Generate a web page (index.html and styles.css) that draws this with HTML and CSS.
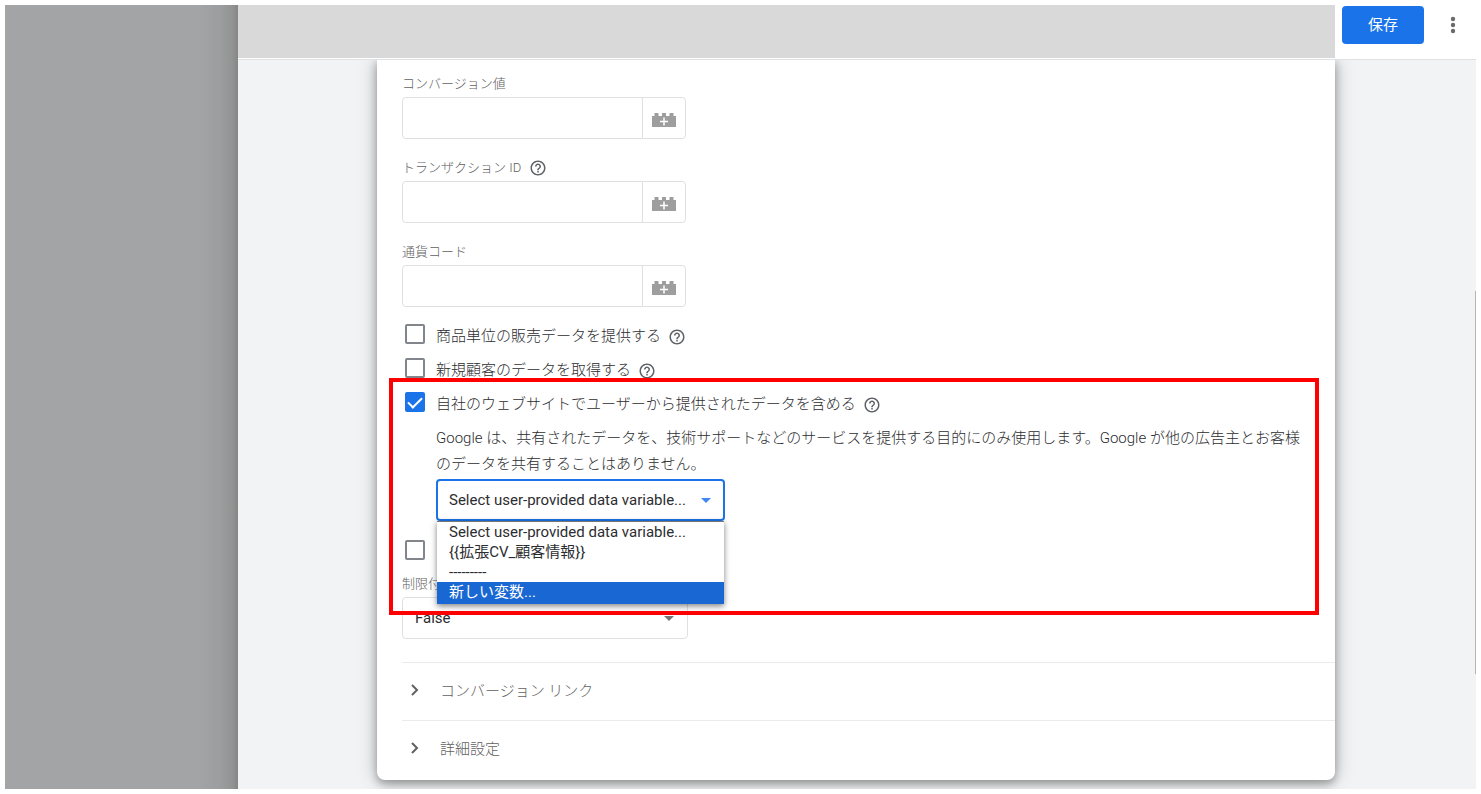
FILE: index.html
```html
<!DOCTYPE html>
<html lang="ja">
<head>
  <meta charset="UTF-8" />
  <meta name="viewport" content="width=device-width, initial-scale=1" />
  <title>タグの設定</title>
  <link rel="stylesheet" href="styles.css">
</head>
<body>

  <svg class="sprite" aria-hidden="true">
    <symbol id="brick" viewBox="0 0 24 16">
      <path fill="#9e9e9e" d="M0 4h2.500V1h4v3h3.500V1h4v3h3.500V1h4v3H24v11H0z" />
      <path stroke="#fff" stroke-width="1.500" d="M12 5.500v8M8 9.500h8" />
    </symbol>
    <symbol id="help" viewBox="0 0 24 24">
      <path d="M11 18h2v-2h-2v2zm1-16C6.480 2 2 6.480 2 12s4.480 10 10 10 10-4.480 10-10S17.520 2 12 2zm0 18c-4.410 0-8-3.590-8-8s3.590-8 8-8 8 3.590 8 8-3.590 8-8 8zm0-14c-2.210 0-4 1.790-4 4h2c0-1.100.9-2 2-2s2 .9 2 2c0 2-3 1.750-3 5h2c0-2.250 3-2.500 3-5 0-2.210-1.790-4-4-4z" />
    </symbol>
  </svg>

  <aside class="backdrop"></aside>

  <main class="sheet">
    <header class="topbar">
      <div class="title-area"></div>
      <div class="actions">
        <button type="button" class="save">保存</button>
        <button type="button" class="more" aria-label="その他">
          <svg width="6" height="18" viewBox="0 0 6 18"><circle cx="3" cy="3" r="2.200" /><circle cx="3" cy="9" r="2.200" /><circle cx="3" cy="15" r="2.200" /></svg>
        </button>
      </div>
    </header>

    <div class="content">
      <form class="card">
        <div class="field">
          <div class="field-label"><label for="value">コンバージョン値</label></div>
          <div class="input-group">
            <input type="text" id="value" />
            <button type="button" aria-label="変数を選択"><svg width="24" height="16"><use href="#brick" /></svg></button>
          </div>
        </div>
        <div class="field">
          <div class="field-label">
            <label for="transaction">トランザクション ID</label>
            <svg class="help" width="18" height="18"><use href="#help" /></svg>
          </div>
          <div class="input-group">
            <input type="text" id="transaction" />
            <button type="button" aria-label="変数を選択"><svg width="24" height="16"><use href="#brick" /></svg></button>
          </div>
        </div>
        <div class="field">
          <div class="field-label"><label for="currency">通貨コード</label></div>
          <div class="input-group">
            <input type="text" id="currency" />
            <button type="button" aria-label="変数を選択"><svg width="24" height="16"><use href="#brick" /></svg></button>
          </div>
        </div>

        <div class="check">
          <input type="checkbox" id="items" />
          <label for="items">商品単位の販売データを提供する</label>
          <svg class="help" width="18" height="18"><use href="#help" /></svg>
        </div>
        <div class="check">
          <input type="checkbox" id="newcustomer" />
          <label for="newcustomer">新規顧客のデータを取得する</label>
          <svg class="help" width="18" height="18"><use href="#help" /></svg>
        </div>

        <div class="highlighted">
          <div class="check">
            <input type="checkbox" id="userdata" checked />
            <label for="userdata">自社のウェブサイトでユーザーから提供されたデータを含める</label>
            <svg class="help" width="18" height="18"><use href="#help" /></svg>
          </div>
          <div class="indent">
            <p>Google は、共有されたデータを、技術サポートなどのサービスを提供する目的にのみ使用します。Google が他の広告主とお客様のデータを共有することはありません。</p>
            <div class="select-box active">
              <select aria-label="ユーザー提供データ変数">
                <option>Select user-provided data variable...</option>
              </select>
              <ul class="menu" role="listbox">
                <li role="option">Select user-provided data variable...</li>
                <li role="option">{{拡張CV_顧客情報}}</li>
                <li role="option">---------</li>
                <li role="option" class="selected" aria-selected="true">新しい変数...</li>
              </ul>
            </div>
          </div>
          <div class="check last">
            <input type="checkbox" aria-label="配送データ" />
          </div>
          <div class="field-label"><label for="restricted">制限付</label></div>
          <div class="frame"></div>
        </div>

        <div class="select-box">
          <select id="restricted">
            <option>False</option>
          </select>
        </div>

        <div class="sections">
          <button type="button" class="section">
            <svg width="8" height="12" viewBox="0 0 8 12"><path d="M1 1l5 5-5 5" /></svg>
            コンバージョン リンク
          </button>
          <button type="button" class="section">
            <svg width="8" height="12" viewBox="0 0 8 12"><path d="M1 1l5 5-5 5" /></svg>
            詳細設定
          </button>
        </div>
      </form>
      <div class="scrollbar"></div>
    </div>
  </main>

</body>
</html>
```

FILE: styles.css
```css
* {
  box-sizing: border-box;
}

body {
  margin: 0;
  padding: 5px;
  height: 100vh;
  display: flex;
  overflow: hidden;
  background: #fff;
  color: #2c2d30;
  font-family: Roboto, "Noto Sans CJK JP", sans-serif;
  font-size: 15px;
}

input,
select,
button {
  font: inherit;
  color: inherit;
}

button {
  border: 0;
  padding: 0;
  background: none;
  cursor: pointer;
}

.sprite {
  display: none;
}

.backdrop {
  width: 233px;
  flex: none;
  background: linear-gradient(to left, #868686 0, #929393 6px, #9c9d9e 18px, #a3a4a5 40px);
}

.sheet {
  flex: 1;
  min-width: 0;
  display: flex;
  flex-direction: column;
}

/* top bar */
.topbar {
  display: flex;
  height: 55px;
  flex: none;
  padding-bottom: 1px;
  border-bottom: 1px solid #dfe1e3;
}

.title-area {
  flex: 1;
  background: #d9d9d9;
}

.actions {
  width: 141px;
  flex: none;
  display: flex;
  align-items: flex-start;
  padding: 1px 0 0 7px;
}

.save {
  width: 82px;
  height: 38px;
  flex: none;
  padding-bottom: 3px;
  border-radius: 4px;
  background: #1a73e8;
  color: #fff;
}

.more {
  width: 58px;
  flex: none;
  height: 38px;
}

.more svg {
  display: block;
  margin: auto;
  fill: #6b6b6b;
}

/* card */
.content {
  flex: 1;
  min-height: 0;
  position: relative;
  overflow: hidden;
  background: #f1f3f4;
}

.card {
  margin: 0 141px 0 139px;
  padding: 11px 0 2px 25px;
  background: #fff;
  border-radius: 0 0 8px 8px;
  box-shadow: 0 4px 8px rgba(0, 0, 0, 0.3), 0 0 20px rgba(0, 0, 0, 0.25);
}

.field {
  margin-bottom: 16px;
}

.field + .check {
  margin-top: -6px;
}

.field-label {
  display: flex;
  align-items: center;
  gap: 8px;
  height: 26px;
  font-size: 13px;
  font-weight: 300;
  color: #616161;
}

.field-label label {
  margin-bottom: 3px;
}

.help {
  flex: none;
  fill: #5f6368;
}

.input-group {
  display: flex;
  width: 284px;
  height: 42px;
  border: 1px solid #e0e0e0;
  border-radius: 4px;
}

.input-group input {
  flex: 1;
  min-width: 0;
  border: 0;
  padding: 0 12px;
  background: none;
}

.input-group button {
  width: 43px;
  border-left: 1px solid #e0e0e0;
}

.input-group svg {
  display: block;
  margin: 4px auto 0;
}

.check {
  display: flex;
  align-items: center;
  height: 34px;
  padding-left: 3px;
}

.check input {
  appearance: none;
  flex: none;
  width: 20px;
  height: 20px;
  margin: 0 11px 0 0;
  border: 2px solid #80868b;
  border-radius: 2px;
}

.check input:checked {
  border-color: #1a73e8;
  background: #1a73e8;
  display: grid;
  place-items: center;
}

.check input:checked::after {
  content: "";
  width: 6px;
  height: 12px;
  border: solid #fff;
  border-width: 0 2px 2px 0;
  transform: translateY(-1px) rotate(45deg);
}

.check label {
  margin-top: 1px;
  font-weight: 300;
}

.check .help {
  margin: 5px 0 0 7px;
}

/* user-provided data */
.highlighted {
  position: relative;
}

.frame {
  position: absolute;
  z-index: 1;
  top: -7px;
  left: -13px;
  right: 16px;
  bottom: -18px;
  border: 4px solid #f00;
  pointer-events: none;
}

.indent {
  padding: 6px 30px 0 34px;
}

.indent p {
  margin: 0 0 2px;
  line-height: 26px;
  font-weight: 300;
}

.check.last {
  margin: 12px 0 4px;
}

.select-box {
  position: relative;
  width: 286px;
}

.select-box select {
  appearance: none;
  display: block;
  width: 100%;
  height: 42px;
  padding: 0 12px;
  border: 1px solid #e0e0e0;
  border-radius: 4px;
  background: #fff;
}

.select-box::after {
  content: "";
  position: absolute;
  top: 19px;
  right: 14px;
  border: 5px solid transparent;
  border-top-color: #757575;
  border-bottom: 0;
  pointer-events: none;
}

.select-box.active {
  width: 289px;
}

.select-box.active select {
  padding: 0 11px;
  border: 2px solid #1a73e8;
}

.select-box.active::after {
  border-top-color: #4285f4;
}

.menu {
  position: absolute;
  z-index: 2;
  top: 42px;
  left: 1px;
  right: 1px;
  margin: 0;
  padding: 0;
  list-style: none;
  line-height: 20px;
  background: #fff;
  border-top: 1px solid #767676;
  box-shadow: 0 2px 6px rgba(0, 0, 0, 0.5);
}

.menu li {
  height: 20px;
  padding: 0 12px;
}

.menu .selected {
  height: 22px;
  background: #1967d2;
  color: #fff;
}

/* collapsed sections */
.sections {
  margin-top: 23px;
}

.section {
  display: flex;
  align-items: center;
  gap: 21px;
  width: 100%;
  height: 58px;
  padding: 0 0 4px 9px;
  border-top: 1px solid #ebebeb;
  font-weight: 300;
  color: #616161;
}

.section svg {
  fill: none;
  stroke: #616161;
  stroke-width: 2;
}

.scrollbar {
  position: absolute;
  top: 231px;
  right: 0;
  width: 1px;
  height: 383px;
  background: #b5b5b5;
}
```
